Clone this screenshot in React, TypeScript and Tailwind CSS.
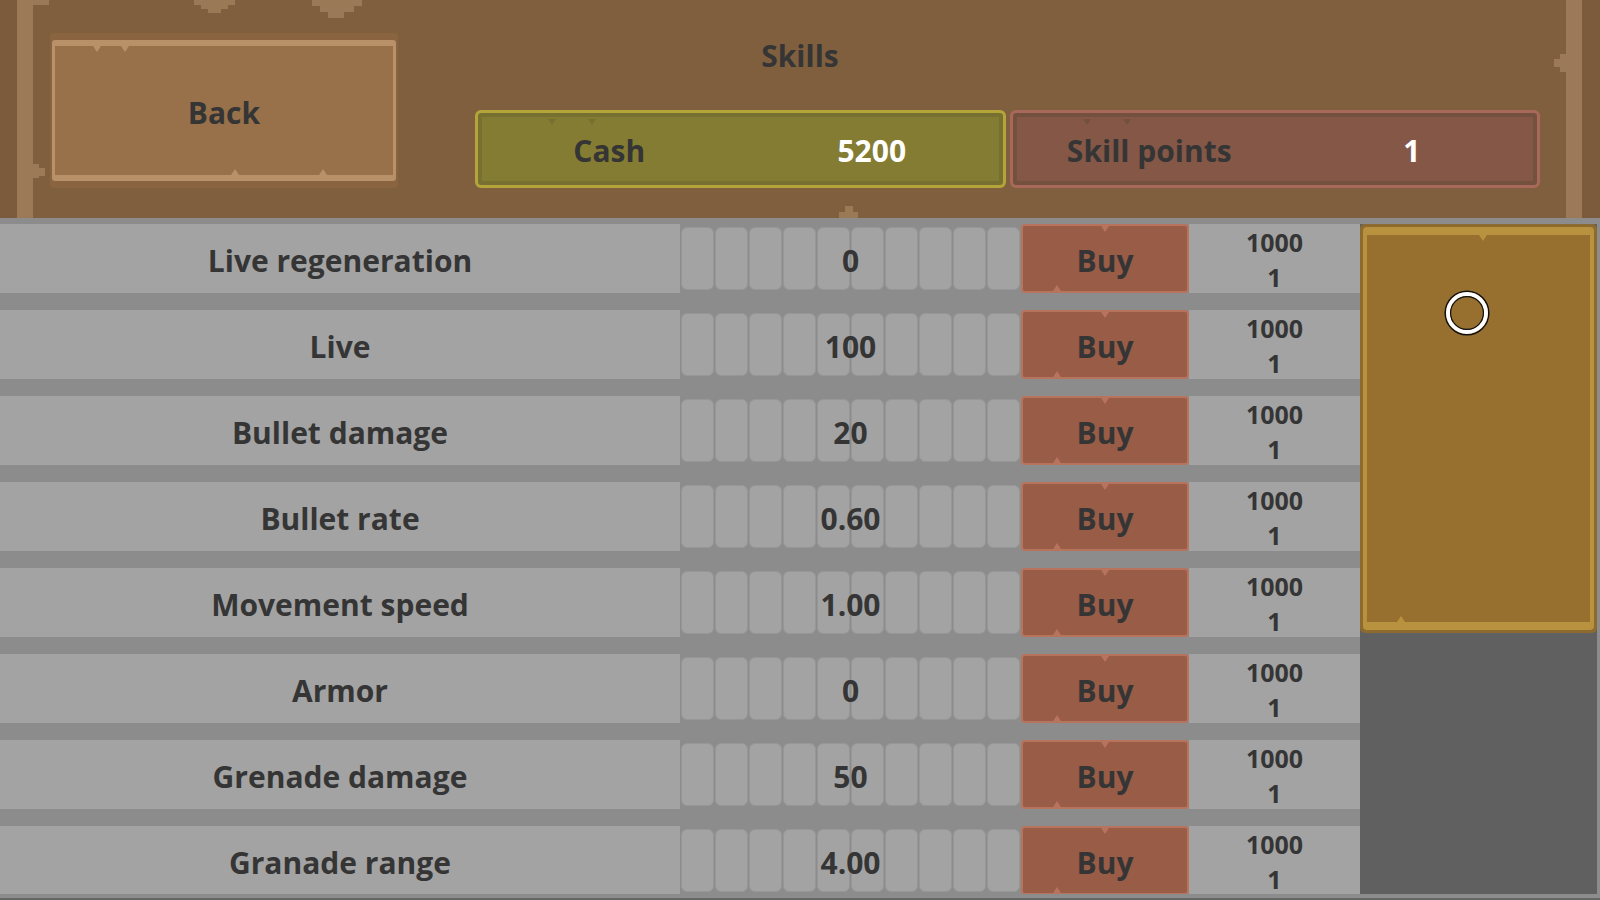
import React from 'react';

type Skill = { name: string; value: string };

const skills: Skill[] = [
  { name: 'Live regeneration', value: '0' },
  { name: 'Live', value: '100' },
  { name: 'Bullet damage', value: '20' },
  { name: 'Bullet rate', value: '0.60' },
  { name: 'Movement speed', value: '1.00' },
  { name: 'Armor', value: '0' },
  { name: 'Grenade damage', value: '50' },
  { name: 'Granade range', value: '4.00' },
];

// stepped pixel-art blob, rows are [x, y, w, h] relative to the blob origin
function Blob({ left, top, rows, color = 'bg-[#9a7957]' }: { left: number; top: number; rows: number[][]; color?: string }) {
  return (
    <div className="absolute pointer-events-none" style={{ left, top }}>
      {rows.map(([x, y, w, h], i) => (
        <div key={i} className={`absolute ${color}`} style={{ left: x, top: y, width: w, height: h }} />
      ))}
    </div>
  );
}

function NotchDown({ className }: { className: string }) {
  return <div className={`absolute w-0 h-0 border-x-[4px] border-x-transparent border-t-[6px] ${className}`} />;
}

function NotchUp({ className }: { className: string }) {
  return <div className={`absolute w-0 h-0 border-x-[4px] border-x-transparent border-b-[6px] ${className}`} />;
}

function StatBox({ label, value, tone }: { label: string; value: string; tone: 'cash' | 'skill' }) {
  const box =
    tone === 'cash'
      ? 'w-[531px] border-[#b4a53b] bg-[#857c33] shadow-[inset_0_0_0_4px_#777030]'
      : 'w-[530px] pl-[11px] border-[#a9695a] bg-[#845747] shadow-[inset_0_0_0_4px_#74503f]';
  const notch = tone === 'cash' ? 'border-t-[#777030]' : 'border-t-[#74503f]';
  return (
    <div className={`relative h-[78px] pt-[3px] flex items-center rounded-[6px] border-[3px] ${box}`}>
      <NotchDown className={`left-[70px] top-[6px] ${notch}`} />
      <NotchDown className={`left-[110px] top-[6px] ${notch}`} />
      <div className="flex-1 text-center text-[30px] font-bold text-[#353535]">{label}</div>
      <div className={`flex-1 text-center text-[30px] font-bold text-white ${tone === 'skill' ? 'pl-[12px]' : ''}`}>
        {value}
      </div>
    </div>
  );
}

function SkillRow({ skill }: { skill: Skill }) {
  return (
    <div className="flex h-[69px] shrink-0">
      <div className="w-[680px] pt-[4px] bg-[#a3a3a3] flex items-center justify-center text-[30px] font-bold">
        {skill.name}
      </div>
      <div className="relative w-[341px] flex gap-[1px] px-[1px] py-[3px]">
        {Array.from({ length: 10 }).map((_, i) => (
          <div key={i} className="flex-1 rounded-[6px] bg-[#a3a3a3] border border-[#979797]" />
        ))}
        <div className="absolute inset-0 pt-[4px] flex items-center justify-center text-[30px] font-bold">
          {skill.value}
        </div>
      </div>
      <div className="relative w-[168px] pt-[4px] rounded-[4px] border-[2px] border-[#b8735d] bg-[#985c47] flex items-center justify-center text-[30px] font-bold">
        <NotchDown className="left-[78px] top-0 border-t-[#b8735d]" />
        <NotchUp className="left-[30px] bottom-0 border-b-[#b8735d]" />
        Buy
      </div>
      <div className="w-[171px] pt-[2px] bg-[#a3a3a3] flex flex-col items-center justify-center text-[25px] font-bold leading-[35px]">
        <span>1000</span>
        <span>1</span>
      </div>
    </div>
  );
}

export default function App() {
  return (
    <div className="w-[1600px] h-[900px] overflow-hidden flex flex-col font-['Open_Sans',sans-serif] text-[#353535]">
      {/* header frame */}
      <header className="relative h-[218px] shrink-0 flex bg-[#805f3f]">
        <div className="w-[17px] bg-[#7b5b3c]" />
        <div className="w-[16px] bg-[#9c7a57]" />

        <div className="flex-1 flex">
          <div className="ml-[17px] mt-[33px] h-[155px] w-[348px] rounded-[4px] bg-[#8a6440] px-[2px] pt-[7px]">
            <div className="relative h-[141px] pt-[3px] rounded-[3px] border-x-[3px] border-y-[6px] border-[#b99168] bg-[#98714a] flex items-center justify-center text-[30px] font-bold">
              <NotchDown className="left-[38px] top-0 border-t-[#b99168]" />
              <NotchDown className="left-[66px] top-0 border-t-[#b99168]" />
              <NotchUp className="left-[176px] bottom-0 border-b-[#b99168]" />
              <NotchUp className="left-[264px] bottom-0 border-b-[#b99168]" />
              Back
            </div>
          </div>

          <div className="ml-[77px] flex flex-col">
            <div className="w-[650px] h-[110px] flex items-center justify-center text-[30px] font-bold">
              Skills
            </div>
            <div className="flex gap-[4px]">
              <StatBox label="Cash" value="5200" tone="cash" />
              <StatBox label="Skill points" value="1" tone="skill" />
            </div>
          </div>
        </div>

        <div className="w-[16px] bg-[#9c7a57]" />
        <div className="w-[18px] bg-[#7b5b3c]" />

        <Blob left={194} top={0} rows={[[0, 0, 41, 5], [7, 5, 27, 4], [14, 9, 13, 4]]} />
        <Blob left={312} top={0} rows={[[0, 0, 50, 6], [8, 6, 34, 6], [16, 12, 16, 6]]} />
        <Blob left={33} top={0} rows={[[0, 0, 16, 5]]} />
        <Blob left={33} top={158} rows={[[0, 6, 6, 14], [6, 10, 6, 8]]} color="bg-[#9c7a57]" />
        <Blob left={1550} top={52} rows={[[10, 2, 6, 18], [4, 7, 6, 8]]} color="bg-[#9c7a57]" />
        <Blob left={839} top={206} rows={[[6, 0, 8, 6], [0, 6, 19, 6]]} />
      </header>

      {/* skills table */}
      <div className="flex-1 flex flex-col bg-[#8c8c8c] border-b-[2px] border-[#666666]">
        <div className="mt-[6px] h-[670px] flex pr-[3px] overflow-hidden">
          <div className="w-[1360px] flex flex-col gap-[17px]">
            {skills.map((s) => (
              <SkillRow key={s.name} skill={s} />
            ))}
          </div>
          <div className="flex-1 bg-[#606060]">
            <div className="h-[409px] rounded-[5px] bg-[#8d6a2e] p-[3px]">
              <div className="relative h-full rounded-[4px] border-x-[4px] border-y-[8px] border-[#b8923f] bg-[#976f2f]">
                <NotchDown className="left-[112px] top-0 border-t-[#b8923f]" />
                <NotchUp className="left-[30px] bottom-0 border-b-[#b8923f]" />
                <svg className="absolute left-[76px] top-[54px]" width="48" height="48" viewBox="0 0 48 48">
                  <circle cx="24" cy="24" r="21.8" fill="none" stroke="#111" strokeWidth="1.5" />
                  <circle cx="24" cy="24" r="19" fill="none" stroke="#fff" strokeWidth="4" />
                  <circle cx="24" cy="24" r="16.4" fill="none" stroke="#111" strokeWidth="1.2" />
                </svg>
              </div>
            </div>
          </div>
        </div>
      </div>
    </div>
  );
}
